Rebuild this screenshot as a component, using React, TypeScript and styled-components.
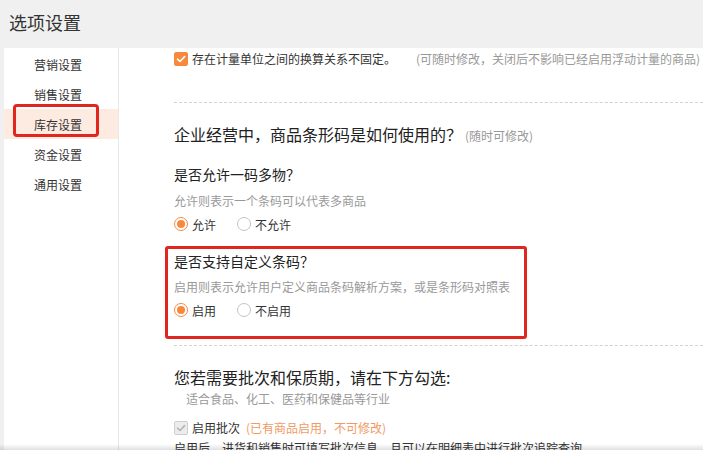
import React from "react";
import styled, { createGlobalStyle } from "styled-components";

const GlobalStyle = createGlobalStyle`
  html, body {
    margin: 0;
    padding: 0;
    background: #f0f0f0;
    font-family: "Noto Sans CJK SC", "Noto Sans", sans-serif;
    color: #333;
  }
`;

const Page = styled.div`
  width: 703px;
  height: 450px;
  overflow: hidden;
  position: relative;
  background: #f0f0f0;
`;

const Header = styled.div`
  height: 48px;
  display: flex;
  align-items: center;
  padding-left: 9px;
  font-size: 18px;
  color: #333;
  padding-bottom: 4px;
  box-sizing: border-box;
`;

const Body = styled.div`
  display: flex;
  height: 402px;
  padding-left: 4px;
`;

const Sidebar = styled.nav`
  width: 114px;
  flex-shrink: 0;
  background: #fff;
  border-right: 1px solid #e8e8e8;
  padding-top: 1px;
`;

const NavItem = styled.div<{ $active?: boolean }>`
  position: relative;
  height: 30px;
  display: flex;
  align-items: center;
  padding-left: 30px;
  font-size: 12px;
  color: #333;
  background: ${(p) => (p.$active ? "#fdebe1" : "transparent")};
`;

const Mark = styled.span`
  position: absolute;
  left: 9px;
  top: -5px;
  width: 86px;
  height: 33px;
  box-sizing: border-box;
  border: 3px solid #e0261f;
  border-radius: 4px;
`;

const Content = styled.main`
  flex: 1;
  background: #fff;
  padding: 2px 0 0 55px;
  overflow: hidden;
`;

const Row = styled.div<{ $mt?: number }>`
  display: flex;
  align-items: center;
  white-space: nowrap;
  margin-top: ${(p) => p.$mt ?? 0}px;
  font-size: 12px;
  line-height: 18px;
  color: #333;
`;

const Box = styled.span<{ $disabled?: boolean }>`
  width: 14px;
  height: 14px;
  box-sizing: border-box;
  border-radius: 2px;
  display: inline-flex;
  align-items: center;
  justify-content: center;
  margin-right: 4px;
  background: ${(p) => (p.$disabled ? "#ececec" : "#f7893c")};
  border: 1px solid ${(p) => (p.$disabled ? "#cfcfcf" : "#f7893c")};
`;

const Hint = styled.span<{ $gap?: number; $color?: string }>`
  margin-left: ${(p) => p.$gap ?? 0}px;
  color: ${(p) => p.$color ?? "#999"};
`;

const Dashed = styled.div<{ $mt: number }>`
  margin-top: ${(p) => p.$mt}px;
  border-top: 1px dashed #d2d2d2;
  height: 0;
`;

const Title = styled.div<{ $mt: number }>`
  margin-top: ${(p) => p.$mt}px;
  font-size: 16px;
  line-height: 24px;
  color: #222;
  white-space: nowrap;
  display: flex;
  align-items: baseline;
`;

const Small = styled.span`
  font-size: 12px;
  color: #999;
  margin-left: 3px;
`;

const Question = styled.div<{ $mt?: number }>`
  margin-top: ${(p) => p.$mt ?? 0}px;
  font-size: 14px;
  line-height: 20px;
  color: #222;
`;

const Desc = styled.div<{ $mt: number; $indent?: number }>`
  margin-top: ${(p) => p.$mt}px;
  padding-left: ${(p) => p.$indent ?? 0}px;
  font-size: 12px;
  line-height: 18px;
  color: #999;
  white-space: nowrap;
`;

const RadioGroup = styled.div<{ $mt: number }>`
  margin-top: ${(p) => p.$mt}px;
  display: flex;
  align-items: center;
  height: 20px;
  gap: 21px;
`;

const RadioLabel = styled.label`
  display: flex;
  align-items: center;
  font-size: 12px;
  color: #333;
`;

const Circle = styled.span<{ $on?: boolean }>`
  width: 14px;
  height: 14px;
  box-sizing: border-box;
  border-radius: 50%;
  border: 1px solid ${(p) => (p.$on ? "#f7893c" : "#c4c4c4")};
  display: inline-flex;
  align-items: center;
  justify-content: center;
  margin-right: 4px;
  background: #fff;
  &::after {
    content: "";
    width: 8px;
    height: 8px;
    border-radius: 50%;
    background: ${(p) => (p.$on ? "#f7893c" : "transparent")};
  }
`;

const Highlight = styled.section`
  margin: 12px 0 0 -9px;
  width: 362px;
  box-sizing: border-box;
  border: 3px solid #e0261f;
  border-radius: 3px;
  padding: 2px 0 16px 6px;
`;

const BottomFade = styled.div`
  position: absolute;
  left: 0;
  right: 0;
  bottom: 0;
  height: 6px;
  background: linear-gradient(to bottom, rgba(0, 0, 0, 0), rgba(0, 0, 0, 0.12));
  pointer-events: none;
`;

const Check = ({ color }: { color: string }) => (
  <svg width="10" height="10" viewBox="0 0 10 10">
    <path d="M1.5 5.2 L4 7.5 L8.6 2.6" fill="none" stroke={color} strokeWidth="1.6" strokeLinecap="round" strokeLinejoin="round" />
  </svg>
);

const Radio = ({ on, label }: { on?: boolean; label: string }) => (
  <RadioLabel>
    <Circle $on={on} />
    {label}
  </RadioLabel>
);

const navItems = ["营销设置", "销售设置", "库存设置", "资金设置", "通用设置"];

export default function App() {
  return (
    <Page>
      <GlobalStyle />
      <Header>选项设置</Header>
      <Body>
        <Sidebar>
          {navItems.map((t, i) => (
            <NavItem key={t} $active={i === 2}>
              {t}
              {i === 2 && <Mark />}
            </NavItem>
          ))}
        </Sidebar>
        <Content>
          <Row>
            <Box>
              <Check color="#fff" />
            </Box>
            存在计量单位之间的换算关系不固定。
            <Hint $gap={20}>(可随时修改，关闭后不影响已经启用浮动计量的商品)</Hint>
          </Row>
          <Dashed $mt={34} />
          <Title $mt={19}>
            企业经营中，商品条形码是如何使用的？<Small>(随时可修改)</Small>
          </Title>
          <Question $mt={16}>是否允许一码多物？</Question>
          <Desc $mt={8}>允许则表示一个条码可以代表多商品</Desc>
          <RadioGroup $mt={4}>
            <Radio on label="允许" />
            <Radio label="不允许" />
          </RadioGroup>
          <Highlight>
            <Question>是否支持自定义条码？</Question>
            <Desc $mt={7}>启用则表示允许用户定义商品条码解析方案，或是条形码对照表</Desc>
            <RadioGroup $mt={4}>
              <Radio on label="启用" />
              <Radio label="不启用" />
            </RadioGroup>
          </Highlight>
          <Dashed $mt={6} />
          <Title $mt={19}>您若需要批次和保质期，请在下方勾选:</Title>
          <Desc $mt={1} $indent={12}>
            适合食品、化工、医药和保健品等行业
          </Desc>
          <Row $mt={11}>
            <Box $disabled>
              <Check color="#b5b5b5" />
            </Box>
            启用批次
            <Hint $gap={6} $color="#f19a66">(已有商品启用，不可修改)</Hint>
          </Row>
          <Row $mt={2}>启用后，进货和销售时可填写批次信息，且可以在明细表中进行批次追踪查询</Row>
        </Content>
      </Body>
      <BottomFade />
    </Page>
  );
}
